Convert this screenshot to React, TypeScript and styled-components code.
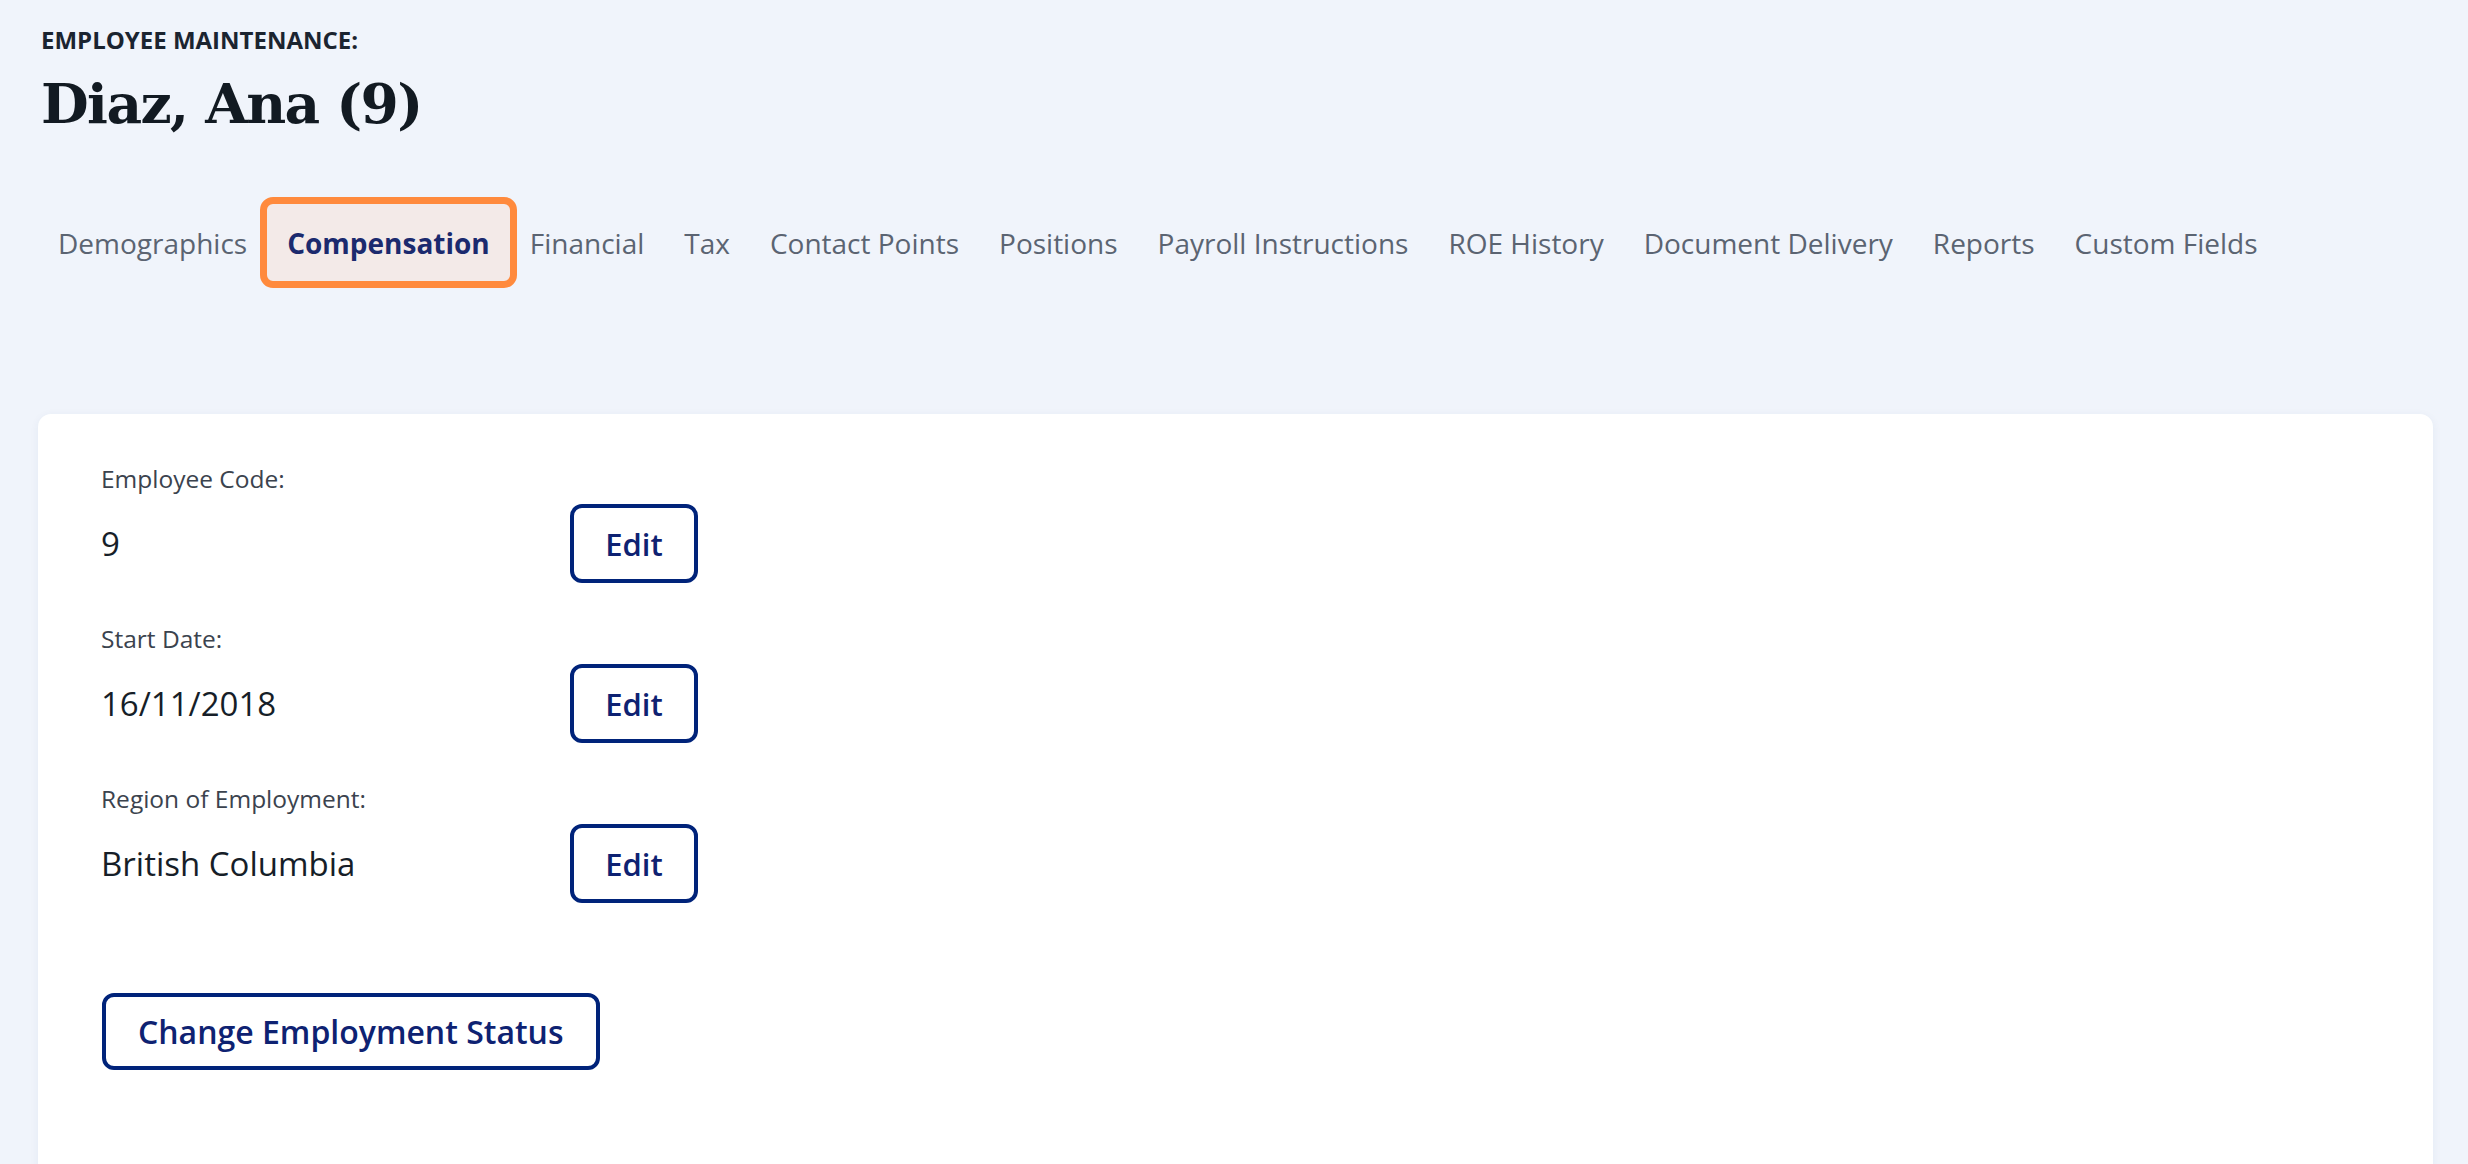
import styled, { createGlobalStyle } from 'styled-components';

const GlobalStyle = createGlobalStyle`
  html, body {
    margin: 0;
    padding: 0;
    background: #f0f4fb;
    font-family: "Open Sans", "Noto Sans", sans-serif;
    overflow: hidden;
  }
  * {
    box-sizing: border-box;
  }
`;

const tabs = [
  'Demographics',
  'Compensation',
  'Financial',
  'Tax',
  'Contact Points',
  'Positions',
  'Payroll Instructions',
  'ROE History',
  'Document Delivery',
  'Reports',
  'Custom Fields',
];

const fields = [
  { label: 'Employee Code:', value: '9' },
  { label: 'Start Date:', value: '16/11/2018' },
  { label: 'Region of Employment:', value: 'British Columbia' },
];

const App = () => {
  return (
    <>
      <GlobalStyle />
      <Page>
        <Header>
          <Eyebrow>EMPLOYEE MAINTENANCE:</Eyebrow>
          <Title>Diaz, Ana (9)</Title>
        </Header>
        <TabBar>
          {tabs.map((t) => (
            <Tab key={t} $active={t === 'Compensation'}>
              {t}
            </Tab>
          ))}
        </TabBar>
        <Card>
          {fields.map((f) => (
            <Field key={f.label}>
              <Label>{f.label}</Label>
              <Row>
                <Value>{f.value}</Value>
                <OutlineButton $small>Edit</OutlineButton>
              </Row>
            </Field>
          ))}
          <Actions>
            <OutlineButton>Change Employment Status</OutlineButton>
          </Actions>
        </Card>
      </Page>
    </>
  );
};

const Page = styled.div`
  padding: 24px 35px 0 38px;
  min-height: 100vh;
`;

const Header = styled.header`
  padding-left: 3px;
  display: flex;
  flex-direction: column;
  gap: 20px;
`;

const Eyebrow = styled.div`
  font-size: 24px;
  line-height: 32px;
  font-weight: 700;
  color: #1b2430;
`;

const Title = styled.h1`
  margin: 0;
  font-family: "DejaVu Serif", "Liberation Serif", serif;
  font-size: 55px;
  line-height: 55px;
  font-weight: 700;
  letter-spacing: -1.6px;
  color: #121a22;
`;

const TabBar = styled.nav`
  display: flex;
  align-items: center;
  margin-top: 73px;
`;

const Tab = styled.div<{ $active?: boolean }>`
  height: 77px;
  padding: 0 20px;
  display: flex;
  align-items: center;
  font-size: 28px;
  white-space: nowrap;
  border-radius: 6px;
  color: ${({ $active }) => ($active ? '#1b2a6e' : '#5b6472')};
  font-weight: ${({ $active }) => ($active ? 700 : 400)};
  background: ${({ $active }) => ($active ? '#f3eae8' : 'transparent')};
  outline: ${({ $active }) => ($active ? '7px solid #ff8a3d' : 'none')};
`;

const Card = styled.section`
  margin-top: 133px;
  background: #ffffff;
  border-radius: 13px;
  box-shadow: 0 2px 10px rgba(40, 60, 120, 0.06);
  min-height: 900px;
  padding: 49px 62px;
  display: flex;
  flex-direction: column;
  gap: 40px;
`;

const Field = styled.div`
  display: flex;
  flex-direction: column;
  gap: 9px;
`;

const Label = styled.div`
  font-size: 24.5px;
  line-height: 32px;
  color: #3b434e;
  padding-left: 1px;
`;

const Row = styled.div`
  display: grid;
  grid-template-columns: 470px auto;
  align-items: center;
  justify-items: start;
`;

const Value = styled.div`
  font-size: 33px;
  font-weight: 500;
  color: #161e28;
  padding-left: 1px;
`;

const OutlineButton = styled.button<{ $small?: boolean }>`
  font-family: "Open Sans", "Noto Sans", sans-serif;
  font-size: ${({ $small }) => ($small ? '31px' : '32px')};
  font-weight: 600;
  color: #0e2272;
  background: #ffffff;
  border: 4px solid #00237a;
  border-radius: 12px;
  height: ${({ $small }) => ($small ? '79px' : '77px')};
  width: ${({ $small }) => ($small ? '128px' : 'auto')};
  padding: ${({ $small }) => ($small ? '0' : '0 32px')};
  cursor: pointer;
`;

const Actions = styled.div`
  margin-top: 50px;
  margin-left: 2px;
`;

export default App;
